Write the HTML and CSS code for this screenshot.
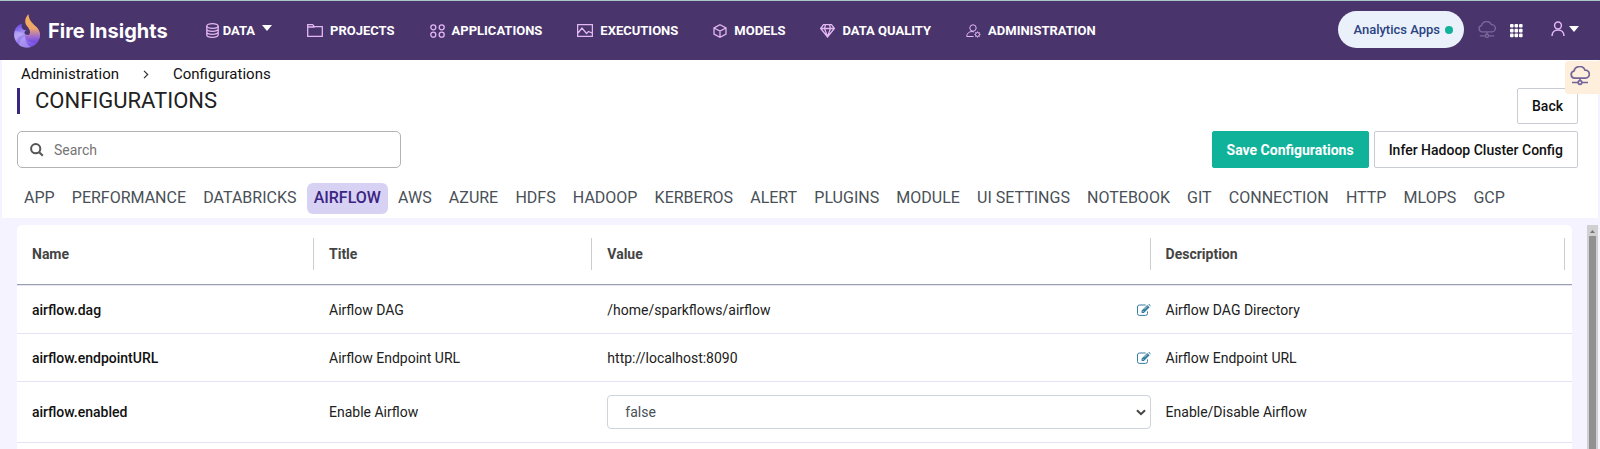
FILE: index.html
```html
<!DOCTYPE html>
<html lang="en">
<head>
<meta charset="utf-8">
<meta name="viewport" content="width=device-width, initial-scale=1">
<title>Configurations - Fire Insights</title>
<link rel="stylesheet" href="styles.css">
</head>
<body>
<svg class="sprite" aria-hidden="true">
  <symbol id="cloud" viewBox="0 0 20 20">
    <path d="M5.200 12.100H4.600A3.600 3.600 0 0 1 4 5A5.800 5.800 0 0 1 15 4.100a4 4 0 0 1 .6 8H5.200M10 12.100v2.900M2 16.500h6M12 16.500h6"/><circle cx="10" cy="16.500" r="1.800"/>
  </symbol>
  <symbol id="edit" viewBox="0 0 14 12">
    <path d="M10.500 7.400v2a2 2 0 0 1-2 2h-6a2 2 0 0 1-2-2v-6.400a2 2 0 0 1 2-2h6.200" fill="none" stroke="currentColor"/>
    <path d="M4.600 8.900V6.600L10.300.9l2.300 2.300-5.700 5.700zM11-.1l.9-.1 1.700 1.700-.2 1z" fill="currentColor"/>
    <path d="M5.600 6.900l1 1M7.200 5.400l3-3" stroke="#fff" stroke-width=".6"/>
  </symbol>
</svg>
<header class="topbar">
  <a class="brand" href="#">
    <svg class="brand-logo" viewBox="0 0 26 34" aria-hidden="true">
      <defs>
        <linearGradient id="flame" x1="0" y1="0" x2="0" y2="1"><stop offset="0" stop-color="#f7b04c"/><stop offset=".5" stop-color="#efa56e"/><stop offset=".8" stop-color="#9a6ad0"/><stop offset="1" stop-color="#7349e0"/></linearGradient>
        <linearGradient id="orb" x1="0" y1="0" x2=".5" y2="1"><stop offset="0" stop-color="#5436e0"/><stop offset=".45" stop-color="#a895f2"/><stop offset="1" stop-color="#7b56e6"/></linearGradient>
      </defs>
      <path d="M8 9.500C3 11 0 15.500 0 20.500a13 13 0 0 0 26 0l-6-3c-2 4-9 4.500-9.500 1.500-.4-1.500 1-2.500 2.500-2.500-4 0-6.500-2.500-5-7z" fill="url(#orb)"/>
      <path d="M14.500 0c-3.500 4-4.500 8-1.500 12 2 3 4 5 2.500 8-1 2-3.500 2.500-5 .8 1 6 6 8.700 12.500 7.700 5-6 3.500-12-1-16-4-3.500-7.500-7-7.500-12.500z" fill="url(#flame)"/>
      <path d="M1 17c3 0 6 1 9.500 4-4 0-7 2-8.500 6-2-3-2-7-1-10zM5 31c1-5 3-8 6-9 0 5 2 9 6 11-4 1.500-9 .5-12-2z" fill="#c9bdf8" opacity=".45"/>
    </svg>
    <span class="brand-name">Fire Insights</span>
  </a>
  <nav class="menu" aria-label="Main">
    <a class="menu-item menu-item-data" href="#"><svg class="icon" width="13" height="15" viewBox="0 0 13 15"><ellipse cx="6.500" cy="3" rx="5.700" ry="2.300"/><path d="M.8 3v9c0 1.300 2.500 2.300 5.700 2.300s5.700-1 5.700-2.300V3M.8 6c0 1.300 2.500 2.300 5.700 2.300s5.700-1 5.700-2.300M.8 9c0 1.300 2.500 2.300 5.700 2.300s5.700-1 5.700-2.300"/></svg>DATA<span class="caret"></span></a>
    <a class="menu-item" href="#"><svg class="icon" width="16" height="13" viewBox="0 0 16 13"><path d="M.7 12.300V.7h5l1.600 2h8v9.600zM.7 3h7"/></svg>PROJECTS</a>
    <a class="menu-item" href="#"><svg class="icon" width="15" height="14" viewBox="0 0 15 14"><circle cx="3.300" cy="3.300" r="2.500"/><circle cx="11.700" cy="3.300" r="2.500"/><circle cx="3.300" cy="10.700" r="2.500"/><circle cx="11.700" cy="10.700" r="2.500"/></svg>APPLICATIONS</a>
    <a class="menu-item" href="#"><svg class="icon" width="16" height="13" viewBox="0 0 16 13"><path d="M.6.6h14.800v11.800H.6zM1 9l4-5 4.500 5.500 2-2L15 9"/></svg>EXECUTIONS</a>
    <a class="menu-item" href="#"><svg class="icon" width="14" height="14" viewBox="0 0 14 14"><path d="M7 .8L13 4v6l-6 3.200L1 10V4zM1 4l6 3 6-3M7 7v6"/></svg>MODELS</a>
    <a class="menu-item" href="#"><svg class="icon" width="15" height="14" viewBox="0 0 15 14"><path d="M3.500.7h8L14.300 4.500 7.500 13 .7 4.500zM.7 4.500h13.600M5.500.7L4.500 4.500l3 8 3-8-1-3.800"/></svg>DATA QUALITY</a>
    <a class="menu-item" href="#"><svg class="icon icon-thin" width="15" height="14" viewBox="0 0 15 14"><circle cx="7" cy="4" r="3.200"/><path d="M7.500 12.500H.7c0-3 2.300-5 5.300-5l2 .4"/><circle cx="11.500" cy="10.500" r="2"/><path d="M11.500 7.500v1M11.500 12.500v1M8.500 10.500h1M13.500 10.500h1M9.400 8.400l.7.700M12.900 11.900l.7.700M13.600 8.400l-.7.700M10.100 11.900l-.7.700"/></svg>ADMINISTRATION</a>
  </nav>
  <div class="tools">
    <a class="apps" href="#">Analytics Apps<span class="dot"></span></a>
    <button class="tool tool-cloud" aria-label="Connection"><svg width="18" height="18" viewBox="0 0 20 20"><use href="#cloud" width="20" height="20"/></svg></button>
    <button class="tool tool-grid" aria-label="App grid"><svg width="13" height="14" viewBox="0 0 13 14" fill="#fff"><rect width="3.600" height="3.600" rx="1"/><rect x="4.500" width="3.600" height="3.600" rx="1"/><rect x="9" width="3.600" height="3.600" rx="1"/><rect y="4.800" width="3.600" height="3.600" rx="1"/><rect x="4.500" y="4.800" width="3.600" height="3.600" rx="1"/><rect x="9" y="4.800" width="3.600" height="3.600" rx="1"/><rect y="9.600" width="3.600" height="3.600" rx="1"/><rect x="4.500" y="9.600" width="3.600" height="3.600" rx="1"/><rect x="9" y="9.600" width="3.600" height="3.600" rx="1"/></svg></button>
    <button class="tool tool-user" aria-label="Account"><svg width="14" height="16" viewBox="0 0 14 16"><circle cx="7" cy="4.500" r="3.400"/><path d="M1 15c0-3.800 2.600-6 6-6s6 2.200 6 6"/></svg><span class="caret"></span></button>
  </div>
</header>
<main class="page">
  <section class="panel">
    <nav class="crumbs" aria-label="Breadcrumb">
      <a href="#">Administration</a>
      <svg width="6" height="9" viewBox="0 0 6 9"><path d="M1 .8l3.700 3.700L1 8.200" fill="none" stroke="#333" stroke-width="1.200"/></svg>
      <a href="#">Configurations</a>
    </nav>
    <div class="heading">
      <h1 class="title">CONFIGURATIONS</h1>
      <button class="btn">Back</button>
    </div>
    <div class="actions">
      <label class="search">
        <svg width="14" height="14" viewBox="0 0 14 14"><circle cx="5.700" cy="5.700" r="4.600"/><path d="M9.200 9.200l3.600 3.600"/></svg>
        <input type="text" placeholder="Search" aria-label="Search">
      </label>
      <div class="buttons">
        <button class="btn btn-primary">Save Configurations</button>
        <button class="btn">Infer Hadoop Cluster Config</button>
      </div>
    </div>
    <nav class="tabs" aria-label="Configuration groups">
      <a href="#">APP</a><a href="#">PERFORMANCE</a><a href="#">DATABRICKS</a><a class="active" href="#" aria-current="page">AIRFLOW</a><a href="#">AWS</a><a href="#">AZURE</a><a href="#">HDFS</a><a href="#">HADOOP</a><a href="#">KERBEROS</a><a href="#">ALERT</a><a href="#">PLUGINS</a><a href="#">MODULE</a><a href="#">UI SETTINGS</a><a href="#">NOTEBOOK</a><a href="#">GIT</a><a href="#">CONNECTION</a><a href="#">HTTP</a><a href="#">MLOPS</a><a href="#">GCP</a>
    </nav>
    <button class="side-tab" aria-label="Connection status"><svg width="20" height="20"><use href="#cloud"/></svg></button>
  </section>
  <section class="content">
    <div class="card">
      <table class="grid">
        <colgroup><col class="col-name"><col class="col-title"><col class="col-value"><col></colgroup>
        <thead>
          <tr><th><div>Name</div></th><th><div>Title</div></th><th><div>Value</div></th><th class="last"><div>Description</div></th></tr>
        </thead>
        <tbody>
          <tr class="first"><td class="name">airflow.dag</td><td>Airflow DAG</td><td><div class="value">/home/sparkflows/airflow<button class="edit" aria-label="Edit airflow.dag"><svg width="14" height="12"><use href="#edit"/></svg></button></div></td><td>Airflow DAG Directory</td></tr>
          <tr><td class="name">airflow.endpointURL</td><td>Airflow Endpoint URL</td><td><div class="value">http://localhost:8090<button class="edit" aria-label="Edit airflow.endpointURL"><svg width="14" height="12"><use href="#edit"/></svg></button></div></td><td>Airflow Endpoint URL</td></tr>
          <tr class="tall"><td class="name"><label for="enabled">airflow.enabled</label></td><td>Enable Airflow</td><td><div class="select"><select id="enabled"><option>false</option><option>true</option></select><svg width="10" height="7" viewBox="0 0 10 7"><path d="M1 1.200l4 4 4-4"/></svg></div></td><td>Enable/Disable Airflow</td></tr>
        </tbody>
      </table>
    </div>
    <div class="scrollbar" aria-hidden="true"><svg width="11" height="11" viewBox="0 0 11 11"><path d="M3 8h5L5.500 5z" fill="#777"/></svg><div class="thumb"></div></div>
  </section>
</main>
</body>
</html>
```
FILE: styles.css
```css
* { box-sizing: border-box; }
body {
  margin: 0;
  height: 100vh;
  display: flex;
  flex-direction: column;
  overflow: hidden;
  background: #f5f3ff;
  color: #212121;
  font: 14px/20px Roboto, "Liberation Sans", sans-serif;
}
a { color: inherit; text-decoration: none; }
button, input, select { font: inherit; color: inherit; }
svg { display: block; flex: none; }
.sprite { position: absolute; width: 0; height: 0; }

.topbar {
  flex: none;
  display: flex;
  align-items: center;
  height: 60px;
  padding: 0 21px 0 14px;
  border-top: 1px solid #a9c9c8;
  background: #4a346c;
  color: #fff;
}
.brand { display: flex; align-items: center; gap: 8px; }
.brand-logo { width: 26px; height: 34px; }
.brand-name { font: 700 20px/28px Inter, sans-serif; }
.menu { display: flex; gap: 35px; margin-left: 38px; font-size: 13px; font-weight: 700; }
.menu-item { display: flex; align-items: center; gap: 7px; white-space: nowrap; }
.menu-item-data { gap: 4px; }
.icon { fill: none; stroke: #e3b8f2; stroke-width: 1.3; }
.icon-thin { stroke-width: 1; }
.caret { border: 5px solid transparent; border-top: 6px solid #fff; border-bottom: 0; }
.menu-item-data .caret { margin: 0 0 5px 3px; }
.tools { display: flex; align-items: center; margin-left: auto; }
.apps {
  display: flex;
  align-items: center;
  gap: 5px;
  height: 37px;
  margin-bottom: 2px;
  padding: 0 11px 0 15px;
  border-radius: 19px;
  background: #eaf1fa;
  color: #2b4380;
  font-size: 13px;
  font-weight: 500;
}
.dot { width: 8px; height: 8px; border-radius: 50%; background: #10b29a; }
.tool { display: flex; align-items: center; gap: 4px; padding: 0; border: 0; background: none; }
.tool-cloud { margin-left: 14px; margin-bottom: 2px; }
.tool-cloud svg { fill: none; stroke: #7d6699; stroke-width: 1.5; }
.tool-grid { margin-left: 14px; }
.tool-user { margin-left: 28px; margin-bottom: 3px; }
.tool-user svg { fill: none; stroke: #e3b8f2; stroke-width: 1.5; }

.page { flex: 1; min-height: 0; display: flex; flex-direction: column; }
.panel { position: relative; flex: none; margin: 0 2px; padding: 4px 20px 4px 15px; background: #fff; }
.crumbs { display: flex; align-items: center; gap: 24px; padding-left: 4px; color: #111; font-size: 15px; }
.heading { display: flex; justify-content: space-between; align-items: flex-start; padding-top: 4px; height: 47px; }
.title { margin: 0; padding-left: 15px; border-left: 3px solid #3b2583; font-size: 22px; line-height: 26px; font-weight: 400; }
.btn {
  height: 36px;
  padding: 0 14px;
  border: 1px solid #c9ccd3;
  border-radius: 2px;
  background: #fff;
  color: #111;
  font-weight: 500;
}
.actions { display: flex; justify-content: space-between; }
.actions .btn { height: 37px; }
.actions .btn-primary { border-color: #10b29a; background: #10b29a; color: #fff; font-weight: 700; }
.buttons { display: flex; gap: 5px; }
.search {
  display: flex;
  align-items: center;
  gap: 10px;
  width: 384px;
  height: 37px;
  padding: 0 12px;
  border: 1px solid #b3b3b3;
  border-radius: 5px;
}
.search svg { fill: none; stroke: #555; stroke-width: 2; }
.search input { flex: 1; min-width: 0; padding: 0; border: 0; outline: 0; background: none; }
.search input::placeholder { color: #757575; opacity: 1; }
.tabs { display: flex; justify-content: space-between; margin: 15px 66px 0 0; color: #495057; font-size: 16px; }
.tabs a { padding: 5px 7px 6px; border-radius: 6px; white-space: nowrap; }
.tabs .active { background: #d7d2f4; color: #3b2583; font-weight: 500; }
.side-tab {
  position: absolute;
  top: 1px;
  right: -2px;
  width: 35px;
  height: 33px;
  padding: 0 5px 3px;
  border: 0;
  border-radius: 3px 0 0 3px;
  background: #fdefdc;
}
.side-tab svg { fill: none; stroke: #75649a; stroke-width: 1.7; }

.content { flex: 1; min-height: 0; display: flex; justify-content: space-between; padding: 7px 2px 0 17px; overflow: hidden; }
.card { flex: 1; margin-right: 15px; overflow: hidden; border-radius: 5px 5px 0 0; background: #fff; }
.grid { width: 100%; border-collapse: separate; border-spacing: 0; table-layout: fixed; }
.col-name { width: 19.1%; }
.col-title { width: 17.9%; }
.col-value { width: 35.9%; }
.grid th { padding: 13px 0 14px; border-bottom: 1px solid #9ca1ad; color: #444; font-weight: 700; text-align: left; }
.grid th div { padding: 6px 15px; border-right: 1px solid #ccc; }
.grid th.last { padding-right: 7px; }
.grid td { height: 48px; padding: 0 0 0 15px; border-bottom: 1px solid #e4e2f6; }
.grid .first td { height: 49px; border-top: 1px solid #e4e2f6; }
.grid .tall td { height: 61px; }
.grid .name { color: #111; font-weight: 500; }
.value { display: flex; justify-content: space-between; align-items: center; }
.edit { padding: 0; border: 0; background: none; color: #347d9e; }
.select { position: relative; }
.select select { display: block; width: 100%; height: 34px; padding: 0 17px; border: 1px solid #ced4da; border-radius: 4px; background: #fff; color: #495057; appearance: none; }
.select svg { position: absolute; right: 5px; top: 14px; fill: none; stroke: #444; stroke-width: 2; pointer-events: none; }
.scrollbar { display: flex; flex-direction: column; width: 11px; background: #d0d0d0; }
.thumb { flex: 1; margin: 0 2px; background: #919191; }
```
